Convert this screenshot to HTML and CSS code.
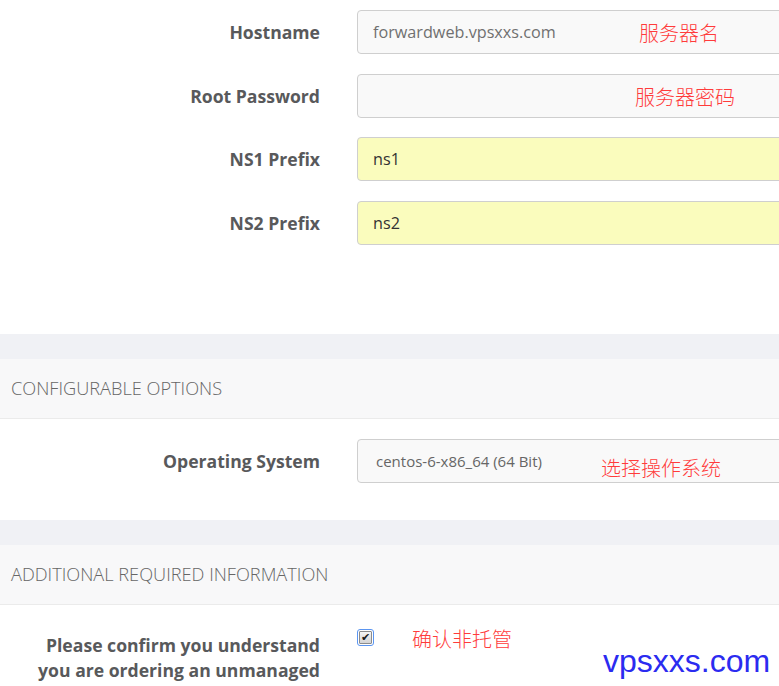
FILE: index.html
```html
<!DOCTYPE html>
<html lang="en">
<head>
<meta charset="utf-8">
<title>Configure</title>
<link rel="stylesheet" href="styles.css">
</head>
<body>
<div class="page">
  <section class="fields first">
    <div class="row">
      <label class="lbl">Hostname</label>
      <input class="ctl muted" type="text" value="forwardweb.vpsxxs.com">
    </div>
    <div class="row">
      <label class="lbl">Root Password</label>
      <input class="ctl" type="password" value="">
    </div>
    <div class="row">
      <label class="lbl">NS1 Prefix</label>
      <input class="ctl yellow" type="text" value="ns1">
    </div>
    <div class="row">
      <label class="lbl">NS2 Prefix</label>
      <input class="ctl yellow" type="text" value="ns2">
    </div>
  </section>

  <div class="band"></div>
  <div class="panel-head">Configurable Options</div>
  <section class="fields second">
    <div class="row">
      <label class="lbl">Operating System</label>
      <select class="ctl sel"><option>centos-6-x86_64 (64 Bit)</option></select>
    </div>
  </section>

  <div class="band"></div>
  <div class="panel-head">Additional Required Information</div>
  <section class="fields third">
    <div class="row top">
      <label class="lbl multi">Please confirm you understand<br>you are ordering an unmanaged</label>
      <span class="check"><span class="tick">&#10004;</span></span>
    </div>
  </section>

  <span class="note n1">服务器名</span>
  <span class="note n2">服务器密码</span>
  <span class="note n3">选择操作系统</span>
  <span class="note n4">确认非托管</span>
  <span class="mark">vpsxxs.com</span>
</div>
</body>
</html>
```
FILE: styles.css
```css
html, body {
  margin: 0;
  padding: 0;
  background: #fff;
  overflow: hidden;
}
body {
  font-family: "Open Sans", "Liberation Sans", sans-serif;
  color: #58595b;
}
.page {
  position: relative;
  width: 779px;
  height: 686px;
  overflow: hidden;
}
.fields {
  display: flex;
  flex-direction: column;
  gap: 19.5px;
}
.fields.first { padding: 10px 0 89px; }
.fields.second { padding: 20px 0 37px; }
.fields.third { padding: 24px 0 0; }
.row {
  display: grid;
  grid-template-columns: 320px 520px;
  column-gap: 37px;
  align-items: center;
}
.row.top { align-items: start; }
.lbl {
  text-align: right;
  font-weight: 700;
  font-size: 17.6px;
  color: #58595b;
}
.lbl.multi {
  line-height: 25px;
  padding-top: 4px;
}
.ctl {
  box-sizing: border-box;
  height: 44px;
  width: 520px;
  margin: 0;
  border: 1px solid #cfcfcf;
  border-radius: 4px;
  background: #f9f9f9;
  padding: 0 15px;
  font-family: "Open Sans", "Liberation Sans", sans-serif;
  font-size: 16.2px;
  color: #333;
  outline: none;
}
.ctl.muted { color: #707070; }
.ctl.yellow { background: #fafcbd; color: #333; }
.ctl.sel {
  appearance: none;
  -webkit-appearance: none;
  font-size: 15px;
  color: #666;
  padding-left: 18px;
}
.band {
  height: 25px;
  background: #f0f1f5;
}
.panel-head {
  box-sizing: border-box;
  height: 60px;
  background: #f8f8f9;
  border-bottom: 1px solid #ebebeb;
  padding-left: 11px;
  display: flex;
  align-items: center;
  text-transform: uppercase;
  font-weight: 300;
  font-size: 18.2px;
  color: #666;
}
.check {
  box-sizing: border-box;
  width: 17px;
  height: 17px;
  border: 1px solid #5b95f0;
  border-radius: 3px;
  padding: 1px;
  display: flex;
}
.tick {
  flex: 1;
  border: 1px solid #8c8c8c;
  border-radius: 1px;
  background: linear-gradient(#f6f6f6, #d4d4d4);
  font-family: "DejaVu Sans", sans-serif;
  font-size: 11px;
  line-height: 11px;
  text-align: center;
  color: #1a1a1a;
}
.note {
  position: absolute;
  font-family: "Noto Sans CJK SC", sans-serif;
  font-weight: 300;
  font-size: 20px;
  color: #ff3b3b;
  line-height: 1;
  white-space: nowrap;
}
.n1 { left: 639px; top: 23px; }
.n2 { left: 635px; top: 87px; }
.n3 { left: 601px; top: 458px; }
.n4 { left: 412px; top: 629px; }
.mark {
  position: absolute;
  left: 603px;
  top: 645px;
  font-family: "Liberation Sans", Arial, sans-serif;
  font-size: 32px;
  line-height: 1;
  color: #2b2bf0;
}
```
